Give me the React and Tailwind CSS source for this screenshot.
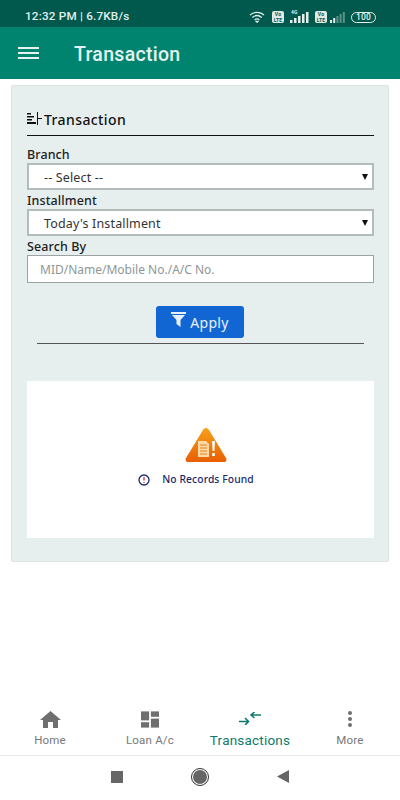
import React from 'react';

const Caret = () => (
  <svg className="w-[6px] h-[6px]" viewBox="0 0 6 6"><path d="M0 0h6L3 6z" fill="#111" /></svg>
);

const SelectBox = ({ value }) => (
  <div className="h-[27px] bg-white border-2 border-[#b4bcbb] flex items-center justify-between pl-[15px] pr-[4px] text-[12.5px] text-[#333] tracking-[0.15px]">
    <span className="mt-[3px]">{value}</span>
    <Caret />
  </div>
);

const Label = ({ children }) => (
  <div className="h-[19px] text-[12.5px] leading-[22px] font-medium text-[#222] tracking-[0.1px]">{children}</div>
);

const Signal = ({ bars, w }) => (
  <svg style={{ width: w }} className="h-[11px]" viewBox="0 0 20 11" preserveAspectRatio="none">
    {[0, 1, 2, 3, 4].map((i) => (
      <rect key={i} x={i * 4} y={8 - i * 2} width="2.5" height={3 + i * 2} fill={i < bars ? '#e4efec' : '#5f9186'} />
    ))}
  </svg>
);

const Volte = () => (
  <div className="w-[12px] h-[12px] rounded-[2px] bg-[#dfe9e6] text-[#00594c] text-[5px] leading-[6px] font-bold text-center">Vo<br />LTE</div>
);

const NavItem = ({ label, active, children }) => (
  <div className="flex-1 flex flex-col items-center">
    <div className="h-[26px] flex items-center justify-center">{children}</div>
    <div className={active ? 'text-[13.5px] leading-[18px] text-[#0f7a6b] tracking-[0.2px]' : 'text-[11.5px] leading-[18px] text-[#777] tracking-[0.2px]'}>{label}</div>
  </div>
);

export default function App() {
  return (
    <div className="w-[400px] h-[800px] bg-white flex flex-col overflow-hidden font-['Noto_Sans',sans-serif]">
      {/* status bar */}
      <div className="h-[27px] bg-[#00594c] flex items-center justify-between pt-[7px] pl-[25px] pr-[24px] font-['Roboto',sans-serif] text-[11.7px] font-medium text-[#e4efec] tracking-[0.2px]">
        <span>12:32 PM | 6.7KB/s</span>
        <div className="flex items-center">
          <svg className="w-[17px] h-[12px] mr-[6px]" viewBox="0 0 18 12" fill="none" stroke="#e4efec" strokeWidth="1.3">
            <path d="M1 4c4-4 11-4 15 0M3.500 6.500c3-2.500 7-2.500 10 0M6 9c1.500-1.200 3.500-1.200 5 0" />
            <path d="M8.500 11.500l1-1h-2z" fill="#e4efec" />
          </svg>
          <Volte />
          <div className="relative ml-[6px] mr-[5px]">
            <span className="absolute -top-[3px] left-[1px] text-[5px] leading-[6px] font-bold">4G</span>
            <Signal bars={5} w={20} />
          </div>
          <Volte />
          <div className="ml-[3px] mr-[5px]">
            <Signal bars={2} w={16} />
          </div>
          <div className="w-[25px] h-[11px] rounded-full border border-[#e4efec] text-[8.5px] leading-[9px] text-center">100</div>
        </div>
      </div>

      {/* app bar */}
      <div className="h-[52px] bg-[#00846f] flex items-center pl-[18px] shrink-0">
        <div className="w-[21px] flex flex-col gap-[3px] -mt-[1px]">
          <div className="h-[2px] bg-[#e6f3f0]" />
          <div className="h-[2px] bg-[#e6f3f0]" />
          <div className="h-[2px] bg-[#e6f3f0]" />
        </div>
        <div className="ml-[35px] mt-[4px] text-[19.5px] font-medium text-[#e6f3f0] font-['Roboto',sans-serif] tracking-[0.3px]">Transaction</div>
      </div>

      {/* card */}
      <div className="mt-[6px] mx-[11px] h-[477px] bg-[#e7efee] border border-[#dde5e4] rounded-[2px] pl-[15px] pr-[14px] pt-[23px]">
        <div className="h-[27px] border-b border-[#111] flex items-start">
          <svg className="w-[16px] h-[14px] mt-[3px] mr-[1px]" viewBox="0 0 16 14" fill="#111">
            <rect x="0" y="1" width="4" height="1.5" />
            <rect x="0" y="4" width="7" height="1.5" />
            <rect x="0" y="7" width="5" height="1.5" />
            <rect x="0" y="10" width="9" height="2" />
            <rect x="10" y="0" width="1" height="13" />
            <rect x="11" y="6" width="4" height="1" />
          </svg>
          <div className="text-[14px] leading-[22px] font-medium text-[#111] tracking-[0.4px]">Transaction</div>
        </div>

        <div className="mt-[8px]">
          <Label>Branch</Label>
          <SelectBox value="-- Select --" />
        </div>
        <div>
          <Label>Installment</Label>
          <SelectBox value="Today's Installment" />
        </div>
        <div>
          <Label>Search By</Label>
          <div className="h-[28px] bg-white border border-[#9aa3a2] flex items-center pl-[12px] pt-[2px] text-[12px] text-[#8f9695]">
            MID/Name/Mobile No./A/C No.
          </div>
        </div>

        <div className="mt-[23px] flex justify-center">
          <div className="w-[88px] h-[32px] -ml-[1px] bg-[#1266d3] rounded-[3px] flex items-center justify-center gap-[4px] text-[14px] text-[#e8f1fb] tracking-[0.3px]">
            <svg className="w-[15px] h-[16px] -mt-[6px]" viewBox="0 0 15 16" fill="#e8f1fb">
              <path d="M0 1h15v2H0zM1 4h13L9.500 9v7L5.500 13V9z" />
            </svg>
            <span>Apply</span>
          </div>
        </div>

        <div className="mt-[5px] mx-[10px] h-[1px] bg-[#555]" />

        <div className="mt-[37px] h-[157px] bg-white flex flex-col items-center pt-[46px]">
          <svg className="w-[42px] h-[36px] ml-[10px]" viewBox="0 0 42 36">
            <defs>
              <linearGradient id="warn" x1="0" y1="0" x2="0" y2="1">
                <stop offset="0" stopColor="#f7a11a" />
                <stop offset="1" stopColor="#e85f04" />
              </linearGradient>
            </defs>
            <path d="M21 1c1.500 0 2.500 1 3.200 2.200L41 31c1.200 2.200 0 4-2.500 4h-35C1 35 -.2 33.200 1 31L17.800 3.200C18.500 2 19.500 1 21 1z" fill="url(#warn)" />
            <path d="M13 14h8l3 3v13H13z" fill="#fbd9a8" />
            <path d="M15 18h7M15 21h7M15 24h7M15 27h7" stroke="#e8801c" strokeWidth="1" />
            <path d="M27 14h3l-.6 10h-1.800zM27.200 26h2.600v3h-2.600z" fill="#fff" />
          </svg>
          <div className="mt-[9px] -ml-[9px] flex items-center text-[10.3px] font-medium text-[#1a2a6c] tracking-[0.1px]">
            <svg className="w-[12px] h-[12px] mr-[12px]" viewBox="0 0 12 12" fill="none">
              <circle cx="6" cy="6" r="5" stroke="#1a2a6c" strokeWidth="1.3" />
              <path d="M6 3v3.500M6 8v1" stroke="#b3262e" strokeWidth="1.2" />
            </svg>
            <span>No Records Found</span>
          </div>
        </div>
      </div>

      {/* bottom nav */}
      <div className="mt-[139px] h-[55px] border-b border-[#e8e8e8] flex pt-[4px] font-['Roboto',sans-serif]">
        <NavItem label="Home">
          <svg className="w-[21px] h-[17px] mt-[2px]" viewBox="0 0 21 17" fill="#6f6f6f"><path d="M10.500 0L21 9h-3v8h-5v-6H8v6H3V9H0z" /></svg>
        </NavItem>
        <NavItem label="Loan A/c">
          <svg className="w-[18px] h-[17px] mt-[2px]" viewBox="0 0 20 18" fill="#6f6f6f">
            <rect x="0" y="0" width="9" height="10" />
            <rect x="0" y="12" width="9" height="6" />
            <rect x="11" y="0" width="9" height="6" />
            <rect x="11" y="8" width="9" height="10" />
          </svg>
        </NavItem>
        <NavItem label="Transactions" active>
          <svg className="w-[22px] h-[13px]" viewBox="0 0 22 13" fill="none" stroke="#0f7a6b" strokeWidth="1.6">
            <path d="M0 9.500h9M6 6l3.500 3.500L6 13M13 3h9M15.500 0L12 3l3.500 3" />
          </svg>
        </NavItem>
        <NavItem label="More">
          <div className="flex flex-col gap-[2px] mt-[1px]">
            <div className="w-[4px] h-[4px] rounded-full bg-[#6f6f6f]" />
            <div className="w-[4px] h-[4px] rounded-full bg-[#6f6f6f]" />
            <div className="w-[4px] h-[4px] rounded-full bg-[#6f6f6f]" />
          </div>
        </NavItem>
      </div>

      {/* android nav */}
      <div className="flex-1 flex items-center justify-center gap-[68px] pb-[3px]">
        <div className="w-[12px] h-[12px] bg-[#666]" />
        <div className="w-[18px] h-[18px] rounded-full border border-[#333] flex items-center justify-center">
          <div className="w-[14px] h-[14px] rounded-full bg-[#666]" />
        </div>
        <svg className="w-[12px] h-[13px]" viewBox="0 0 12 13" fill="#666"><path d="M12 0v13L0 6.500z" /></svg>
      </div>
    </div>
  );
}
